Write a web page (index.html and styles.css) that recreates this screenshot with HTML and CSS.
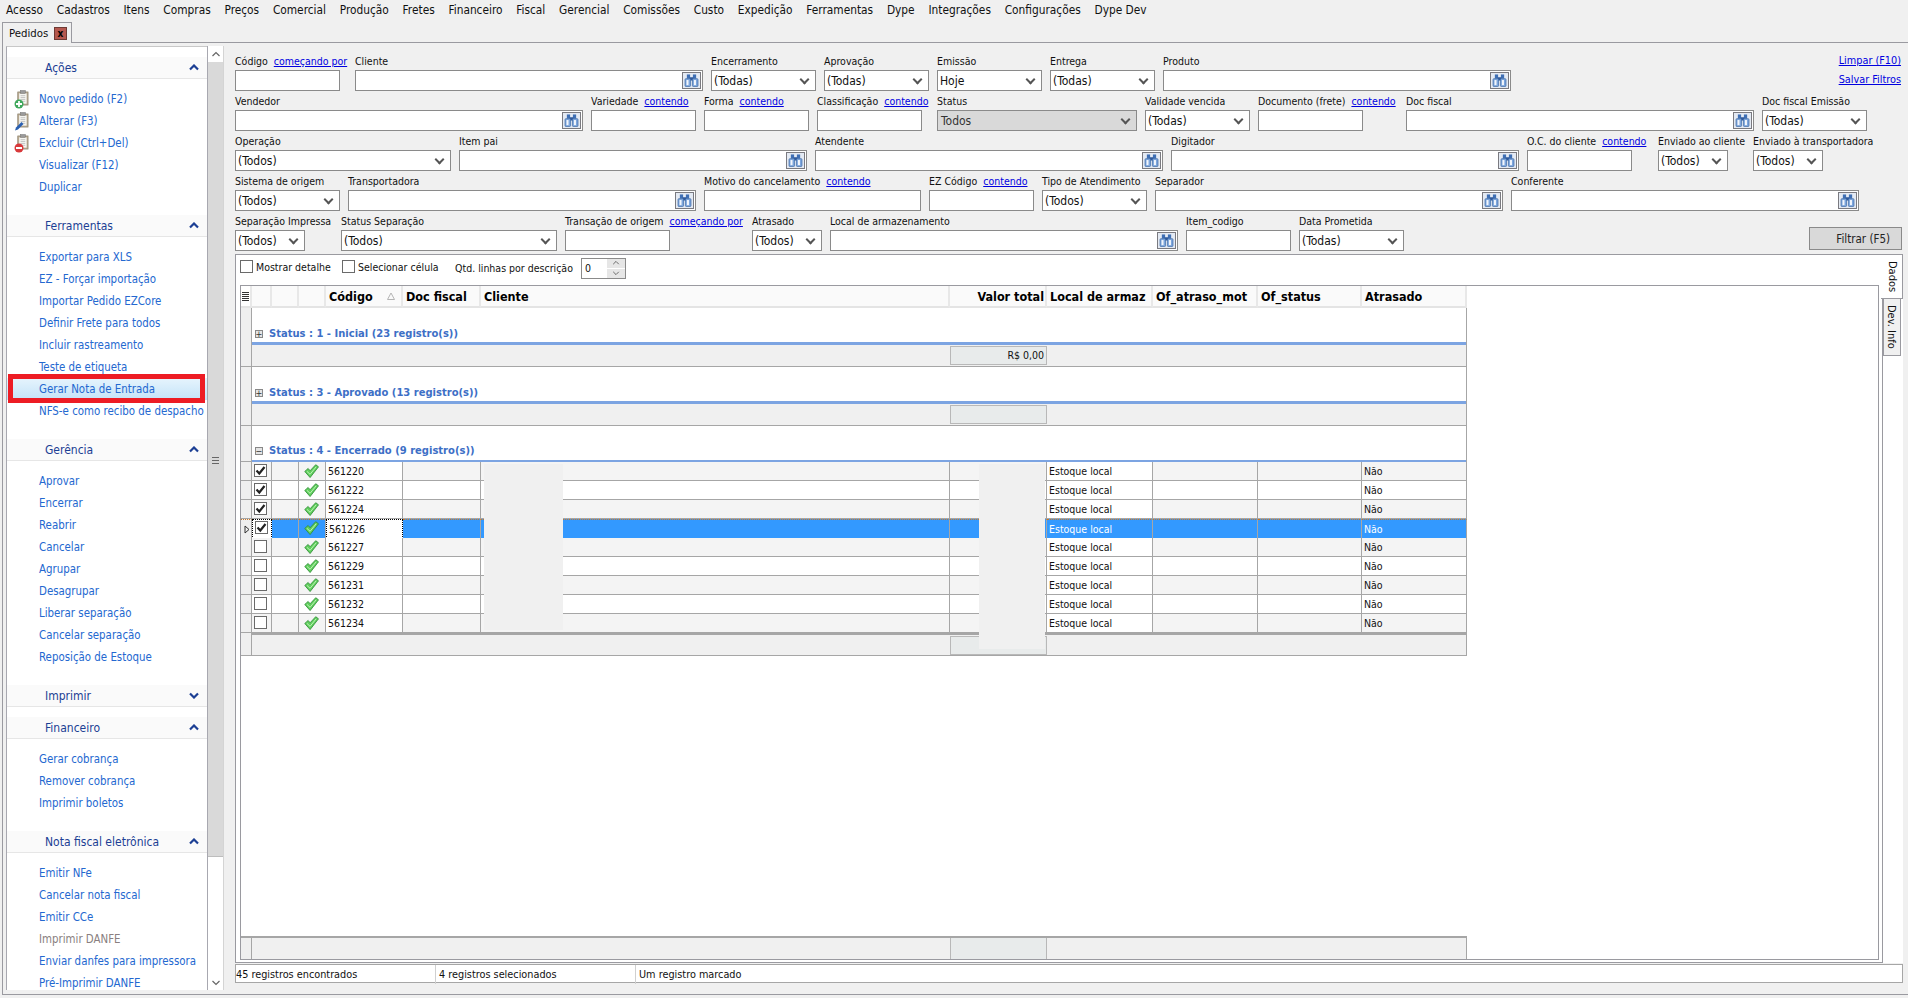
FILE: index.html
```html
<!DOCTYPE html>
<html>
<head>
    <title>Pedidos</title>
    <link rel="stylesheet" href="styles.css">
</head>
<body>

<svg class="defs" width="0" height="0">
    <symbol id="bino" viewBox="0 0 16 14">
        <rect x="3" y="0.5" width="3.5" height="4.5" fill="#3f6fb4"/>
        <rect x="9.5" y="0.5" width="3.5" height="4.5" fill="#3f6fb4"/>
        <rect x="6" y="3.5" width="4" height="3.5" fill="#2f5a9c"/>
        <rect x="1" y="5" width="6" height="8.5" rx="1" fill="#7ea6dc" stroke="#35619f" stroke-width="0.7"/>
        <rect x="9" y="5" width="6" height="8.5" rx="1" fill="#7ea6dc" stroke="#35619f" stroke-width="0.7"/>
        <rect x="2.6" y="6.5" width="2.2" height="5.5" fill="#f2f6fc"/>
        <rect x="10.6" y="6.5" width="2.2" height="5.5" fill="#f2f6fc"/>
    </symbol>
    <symbol id="board" viewBox="0 0 16 18">
        <rect x="4" y="2" width="11" height="14" fill="#b8aa92" stroke="#8a7f6a" stroke-width="0.7"/>
        <rect x="5.5" y="3.5" width="8" height="11" fill="#f6f6f2"/>
        <path d="M7 6h5M7 8h5M7 10h5M7 12h5" stroke="#b4b4b4" stroke-width="0.8"/>
        <rect x="7" y="0.5" width="5" height="3" fill="#9a9a9a" stroke="#6a6a6a" stroke-width="0.5"/>
    </symbol>
    <symbol id="ok" viewBox="0 0 16 15">
        <path d="M0.8 8 L4.4 4.8 L6.5 7.2 L12.5 0.8 L15.5 3 L6.5 14.5 Z" fill="#5fcf5c" stroke="#2d8c36" stroke-width="0.9" stroke-linejoin="round"/>
        <path d="M3 7.8 L6.5 11 L13 3" fill="none" stroke="#c4f4bc" stroke-width="1"/>
    </symbol>
    <symbol id="tick" viewBox="0 0 11 11">
        <path d="M1.5 5.5 L4.3 8.5 L9.5 2" fill="none" stroke="#222" stroke-width="2.2"/>
    </symbol>
    <symbol id="chev" viewBox="0 0 10 7">
        <path d="M1 5.5 L5 1.5 L9 5.5" fill="none" stroke="#1c3f94" stroke-width="2.2"/>
    </symbol>
    <symbol id="arrow" viewBox="0 0 10 7">
        <path d="M1.5 5 L5 1.5 L8.5 5" fill="none" stroke="#666" stroke-width="1.2"/>
    </symbol>
</svg>

<div class="menu-bar">
    <span>Acesso</span>
    <span>Cadastros</span>
    <span>Itens</span>
    <span>Compras</span>
    <span>Preços</span>
    <span>Comercial</span>
    <span>Produção</span>
    <span>Fretes</span>
    <span>Financeiro</span>
    <span>Fiscal</span>
    <span>Gerencial</span>
    <span>Comissões</span>
    <span>Custo</span>
    <span>Expedição</span>
    <span>Ferramentas</span>
    <span>Dype</span>
    <span>Integrações</span>
    <span>Configurações</span>
    <span>Dype Dev</span>
</div>

<div class="tab-strip">
    <div class="page-tab">Pedidos <span class="tab-close">x</span></div>
</div>

<div class="main">
    <div class="sidebar">
        <div class="side-head">Ações <svg class="chev"><use href="#chev"/></svg></div>
        <div class="side-list">
            <a class="action"><svg class="ico"><use href="#board"/></svg><svg class="badge"><circle cx="5" cy="5" r="4.5" fill="#3fa85c"/><path d="M5 2v6M2 5h6" stroke="#fff" stroke-width="1.8"/></svg>Novo pedido (F2)</a>
            <a class="action"><svg class="ico"><use href="#board"/></svg><svg class="badge"><path d="M1 9.5 L2 6.5 L7.5 1 L9.5 3 L4 8.5 Z" fill="#2a5fb0"/></svg>Alterar (F3)</a>
            <a class="action"><svg class="ico"><use href="#board"/></svg><svg class="badge"><circle cx="5" cy="5" r="4.5" fill="#d8393b"/><path d="M2 5h6" stroke="#fff" stroke-width="2"/></svg>Excluir (Ctrl+Del)</a>
            <a class="action">Visualizar (F12)</a>
            <a class="action">Duplicar</a>
        </div>

        <div class="side-head">Ferramentas <svg class="chev"><use href="#chev"/></svg></div>
        <div class="side-list">
            <a class="action">Exportar para XLS</a>
            <a class="action">EZ - Forçar importação</a>
            <a class="action">Importar Pedido EZCore</a>
            <a class="action">Definir Frete para todos</a>
            <a class="action">Incluir rastreamento</a>
            <a class="action">Teste de etiqueta</a>
            <a class="action marked">Gerar Nota de Entrada</a>
            <a class="action">NFS-e como recibo de despacho</a>
        </div>

        <div class="side-head">Gerência <svg class="chev"><use href="#chev"/></svg></div>
        <div class="side-list">
            <a class="action">Aprovar</a>
            <a class="action">Encerrar</a>
            <a class="action">Reabrir</a>
            <a class="action">Cancelar</a>
            <a class="action">Agrupar</a>
            <a class="action">Desagrupar</a>
            <a class="action">Liberar separação</a>
            <a class="action">Cancelar separação</a>
            <a class="action">Reposição de Estoque</a>
        </div>

        <div class="side-head closed">Imprimir <svg class="chev flip"><use href="#chev"/></svg></div>

        <div class="side-head">Financeiro <svg class="chev"><use href="#chev"/></svg></div>
        <div class="side-list">
            <a class="action">Gerar cobrança</a>
            <a class="action">Remover cobrança</a>
            <a class="action">Imprimir boletos</a>
        </div>

        <div class="side-head">Nota fiscal eletrônica <svg class="chev"><use href="#chev"/></svg></div>
        <div class="side-list">
            <a class="action">Emitir NFe</a>
            <a class="action">Cancelar nota fiscal</a>
            <a class="action">Emitir CCe</a>
            <a class="action muted">Imprimir DANFE</a>
            <a class="action">Enviar danfes para impressora</a>
            <a class="action">Pré-Imprimir DANFE</a>
        </div>
    </div>

    <div class="side-scroll">
        <div class="scroll-btn"><svg class="arrow"><use href="#arrow"/></svg></div>
        <div class="scroll-thumb"><span class="grip"></span></div>
        <div class="scroll-rest"></div>
        <div class="scroll-btn"><svg class="arrow flip"><use href="#arrow"/></svg></div>
    </div>

    <div class="content">
        <div class="filter-row">
            <div class="field w105 mr7"><label>Código <a>começando por</a></label><div class="box"></div></div>
            <div class="field w348"><label>Cliente</label><div class="box"><button class="find"><svg><use href="#bino"/></svg></button></div></div>
            <div class="field w105"><label>Encerramento</label><div class="box combo">(Todas)</div></div>
            <div class="field w105"><label>Aprovação</label><div class="box combo">(Todas)</div></div>
            <div class="field w105"><label>Emissão</label><div class="box combo">Hoje</div></div>
            <div class="field w105"><label>Entrega</label><div class="box combo">(Todas)</div></div>
            <div class="field w348"><label>Produto</label><div class="box"><button class="find"><svg><use href="#bino"/></svg></button></div></div>
            <div class="filter-links"><a>Limpar (F10)</a><a>Salvar Filtros</a></div>
        </div>
        <div class="filter-row">
            <div class="field w348"><label>Vendedor</label><div class="box"><button class="find"><svg><use href="#bino"/></svg></button></div></div>
            <div class="field w105"><label>Variedade <a>contendo</a></label><div class="box"></div></div>
            <div class="field w105"><label>Forma <a>contendo</a></label><div class="box"></div></div>
            <div class="field w105 mr7"><label>Classificação <a>contendo</a></label><div class="box"></div></div>
            <div class="field w200"><label>Status</label><div class="box combo off">Todos</div></div>
            <div class="field w105"><label>Validade vencida</label><div class="box combo">(Todas)</div></div>
            <div class="field w105 mr35"><label>Documento (frete) <a>contendo</a></label><div class="box"></div></div>
            <div class="field w348"><label>Doc fiscal</label><div class="box"><button class="find"><svg><use href="#bino"/></svg></button></div></div>
            <div class="field w105"><label>Doc fiscal Emissão</label><div class="box combo">(Todas)</div></div>
        </div>
        <div class="filter-row">
            <div class="field w216"><label>Operação</label><div class="box combo">(Todos)</div></div>
            <div class="field w348"><label>Item pai</label><div class="box"><button class="find"><svg><use href="#bino"/></svg></button></div></div>
            <div class="field w348"><label>Atendente</label><div class="box"><button class="find"><svg><use href="#bino"/></svg></button></div></div>
            <div class="field w348"><label>Digitador</label><div class="box"><button class="find"><svg><use href="#bino"/></svg></button></div></div>
            <div class="field w105 mr18"><label>O.C. do cliente <a>contendo</a></label><div class="box"></div></div>
            <div class="field w70 mr17"><label>Enviado ao cliente</label><div class="box combo">(Todos)</div></div>
            <div class="field w70"><label>Enviado à transportadora</label><div class="box combo">(Todos)</div></div>
        </div>
        <div class="filter-row">
            <div class="field w105"><label>Sistema de origem</label><div class="box combo">(Todos)</div></div>
            <div class="field w348"><label>Transportadora</label><div class="box"><button class="find"><svg><use href="#bino"/></svg></button></div></div>
            <div class="field w217"><label>Motivo do cancelamento <a>contendo</a></label><div class="box"></div></div>
            <div class="field w105"><label>EZ Código <a>contendo</a></label><div class="box"></div></div>
            <div class="field w105"><label>Tipo de Atendimento</label><div class="box combo">(Todos)</div></div>
            <div class="field w348"><label>Separador</label><div class="box"><button class="find"><svg><use href="#bino"/></svg></button></div></div>
            <div class="field w348"><label>Conferente</label><div class="box"><button class="find"><svg><use href="#bino"/></svg></button></div></div>
        </div>
        <div class="filter-row">
            <div class="field w70 mr28"><label>Separação Impressa</label><div class="box combo">(Todos)</div></div>
            <div class="field w216"><label>Status Separação</label><div class="box combo">(Todos)</div></div>
            <div class="field w105 mr74"><label>Transação de origem <a>começando por</a></label><div class="box"></div></div>
            <div class="field w70"><label>Atrasado</label><div class="box combo">(Todos)</div></div>
            <div class="field w348"><label>Local de armazenamento</label><div class="box"><button class="find"><svg><use href="#bino"/></svg></button></div></div>
            <div class="field w105"><label>Item_codigo</label><div class="box"></div></div>
            <div class="field w105"><label>Data Prometida</label><div class="box combo">(Todas)</div></div>
            <button class="filter-btn">Filtrar (F5)</button>
        </div>

        <div class="panel">
            <div class="panel-body">
                <div class="grid-tools">
                    <span class="tool-check"><i class="cb"></i>Mostrar detalhe</span>
                    <span class="tool-check"><i class="cb"></i>Selecionar célula</span>
                    <span class="qtd">Qtd. linhas por descrição</span>
                    <span class="spin">0<span class="spin-btns"><span><svg class="arrow"><use href="#arrow"/></svg></span><span><svg class="arrow flip"><use href="#arrow"/></svg></span></span></span>
                </div>

                <div class="grid-frame">
                    <div class="cols head">
                        <span class="hd-ind"><b></b><b></b><b></b><b></b><b></b></span>
                        <span></span>
                        <span></span>
                        <span></span>
                        <span>Código<svg class="sort"><path d="M4 1 L7.5 7.5 H0.5 Z" fill="none" stroke="#b4b4b4"/></svg></span>
                        <span>Doc fiscal</span>
                        <span>Cliente</span>
                        <span class="right">Valor total</span>
                        <span>Local de armaz</span>
                        <span>Of_atraso_mot</span>
                        <span>Of_status</span>
                        <span>Atrasado</span>
                    </div>

                    <div class="group">
                        <div class="group-ind"></div>
                        <div class="group-main">
                            <div class="group-title"><i class="expander">+</i>Status : 1 - Inicial (23 registro(s))</div>
                            <div class="group-foot"><span class="sum">R$ 0,00</span></div>
                        </div>
                    </div>
                    <div class="group">
                        <div class="group-ind"></div>
                        <div class="group-main">
                            <div class="group-title"><i class="expander">+</i>Status : 3 - Aprovado (13 registro(s))</div>
                            <div class="group-foot"><span class="sum"></span></div>
                        </div>
                    </div>
                    <div class="group open">
                        <div class="group-ind"></div>
                        <div class="group-main">
                            <div class="group-title"><i class="expander">−</i>Status : 4 - Encerrado (9 registro(s))</div>
                        </div>
                    </div>

                    <div class="cols row"><span class="ind"></span><span class="chk"><i class="cb"><svg><use href="#tick"/></svg></i></span><span></span><span class="st"><svg><use href="#ok"/></svg></span><span class="plain">561220</span><span></span><span></span><span></span><span class="plain">Estoque local</span><span></span><span></span><span>Não</span></div>
                    <div class="cols row alt"><span class="ind"></span><span class="chk"><i class="cb"><svg><use href="#tick"/></svg></i></span><span></span><span class="st"><svg><use href="#ok"/></svg></span><span class="plain">561222</span><span></span><span></span><span></span><span class="plain">Estoque local</span><span></span><span></span><span>Não</span></div>
                    <div class="cols row"><span class="ind"></span><span class="chk"><i class="cb"><svg><use href="#tick"/></svg></i></span><span></span><span class="st"><svg><use href="#ok"/></svg></span><span class="plain">561224</span><span></span><span></span><span></span><span class="plain">Estoque local</span><span></span><span></span><span>Não</span></div>
                    <div class="cols row picked"><span class="ind"><svg class="pointer"><path d="M1 1 L5 4.5 L1 8 Z" fill="none" stroke="#333"/></svg></span><span class="chk focus"><i class="cb"><svg><use href="#tick"/></svg></i></span><span></span><span class="st"><svg><use href="#ok"/></svg></span><span class="focus">561226</span><span></span><span></span><span></span><span>Estoque local</span><span></span><span></span><span>Não</span></div>
                    <div class="cols row"><span class="ind"></span><span class="chk"><i class="cb"></i></span><span></span><span class="st"><svg><use href="#ok"/></svg></span><span class="plain">561227</span><span></span><span></span><span></span><span class="plain">Estoque local</span><span></span><span></span><span>Não</span></div>
                    <div class="cols row alt"><span class="ind"></span><span class="chk"><i class="cb"></i></span><span></span><span class="st"><svg><use href="#ok"/></svg></span><span class="plain">561229</span><span></span><span></span><span></span><span class="plain">Estoque local</span><span></span><span></span><span>Não</span></div>
                    <div class="cols row"><span class="ind"></span><span class="chk"><i class="cb"></i></span><span></span><span class="st"><svg><use href="#ok"/></svg></span><span class="plain">561231</span><span></span><span></span><span></span><span class="plain">Estoque local</span><span></span><span></span><span>Não</span></div>
                    <div class="cols row alt"><span class="ind"></span><span class="chk"><i class="cb"></i></span><span></span><span class="st"><svg><use href="#ok"/></svg></span><span class="plain">561232</span><span></span><span></span><span></span><span class="plain">Estoque local</span><span></span><span></span><span>Não</span></div>
                    <div class="cols row"><span class="ind"></span><span class="chk"><i class="cb"></i></span><span></span><span class="st"><svg><use href="#ok"/></svg></span><span class="plain">561234</span><span></span><span></span><span></span><span class="plain">Estoque local</span><span></span><span></span><span>Não</span></div>

                    <div class="group last">
                        <div class="group-ind"></div>
                        <div class="group-main">
                            <div class="group-foot"><span class="sum"></span></div>
                        </div>
                    </div>

                    <div class="grid-band">
                        <div class="group-ind"></div>
                        <div class="band-main"><span class="sum"></span></div>
                    </div>

                    <div class="mask mask-client"></div>
                    <div class="mask mask-value"></div>
                </div>
            </div>
            <div class="side-tabs">
                <div class="v-tab active">Dados</div>
                <div class="v-tab">Dev. Info</div>
            </div>
        </div>

        <div class="status-bar">
            <span>45 registros encontrados</span>
            <span>4 registros selecionados</span>
            <span>Um registro marcado</span>
        </div>
    </div>
</div>

</body>
</html>
```

FILE: styles.css
```css
* {
    box-sizing: border-box;
}
html, body {
    height: 100%;
}
body {
    margin: 0;
    display: flex;
    flex-direction: column;
    overflow: hidden;
    background: #f0f0f0;
    color: #111;
    font-family: "DejaVu Sans", Tahoma, sans-serif;
    font-stretch: condensed;
    font-size: 10.5px;
}
.defs {
    position: absolute;
}
a {
    color: #0000e0;
    text-decoration: underline;
}

/* top menu */
.menu-bar {
    display: flex;
    gap: 13.75px;
    height: 22px;
    padding: 2px 0 0 6px;
    font-size: 11.8px;
    line-height: 16px;
}
.tab-strip {
    height: 21px;
    margin-left: 2px;
    border-bottom: 1px solid #9a9aa0;
}
.page-tab {
    display: flex;
    justify-content: space-between;
    align-items: center;
    width: 70px;
    height: 21px;
    padding: 0 4px 0 6px;
    font-size: 11.3px;
    background: #f0f0f0;
    border: 1px solid #9a9aa0;
    border-bottom: none;
}
.tab-close {
    width: 13px;
    height: 13px;
    font-size: 10px;
    font-weight: bold;
    line-height: 11px;
    text-align: center;
    background: #b4574e;
    border: 1px solid #6e3a34;
    color: #000;
}

.main {
    flex: 1;
    display: flex;
    min-height: 0;
    margin: 0 0 3px 2px;
    padding: 3px 0 4px 3px;
    border-left: 1px solid #9a9aa0;
    border-bottom: 1px solid #9a9aa0;
}

/* left actions */
.sidebar {
    width: 201px;
    flex: none;
    padding-top: 10px;
    overflow: hidden;
    background: #fff;
    border-left: 1px solid #a8a8b0;
    border-top: 1px solid #c8c8c8;
}
.side-head {
    display: flex;
    justify-content: space-between;
    align-items: center;
    height: 22px;
    padding: 0 8px 0 38px;
    color: #1c3f94;
    font-size: 12px;
    background: #fafafa;
    border-bottom: 1px solid #e6e6e6;
}
.side-head.closed {
    margin-bottom: 10px;
}
.chev {
    width: 10px;
    height: 7px;
}
.flip {
    transform: scaleY(-1);
}
.side-list {
    padding: 9px 0 17px;
}
.action {
    display: flex;
    align-items: center;
    position: relative;
    height: 22px;
    padding-left: 32px;
    color: #2468d0;
    font-size: 11.4px;
    text-decoration: none;
    white-space: nowrap;
}
.action.muted {
    color: #8a7f80;
}
.action.marked {
    background: linear-gradient(#e6f4fd, #c4e3f8);
}
.action.marked::after {
    content: "";
    position: absolute;
    left: 1px;
    right: 2px;
    top: -4px;
    bottom: -3px;
    border: 5px solid #ed1c24;
}
.ico {
    position: absolute;
    left: 7px;
    top: 2px;
    width: 15px;
    height: 17px;
}
.badge {
    position: absolute;
    left: 7px;
    top: 11px;
    width: 10px;
    height: 10px;
}

.side-scroll {
    width: 17px;
    flex: none;
    display: flex;
    flex-direction: column;
    border-left: 1px solid #a8a8b0;
    border-right: 1px solid #d4d4d4;
    background: #fff;
}
.scroll-btn {
    display: flex;
    justify-content: center;
    align-items: center;
    height: 16px;
    flex: none;
}
.arrow {
    width: 10px;
    height: 7px;
}
.scroll-thumb {
    display: flex;
    align-items: center;
    justify-content: center;
    height: 795px;
    flex: none;
    background: #d9d9d9;
    border-bottom: 1px solid #bdbdbd;
}
.grip {
    width: 7px;
    height: 7px;
    margin-top: 3px;
    border-top: 1px solid #666;
    border-bottom: 1px solid #666;
    background: linear-gradient(#d9d9d9 2px, #666 2px, #666 3px, #d9d9d9 3px);
}
.scroll-rest {
    flex: 1;
}

/* filters */
.content {
    flex: 1;
    min-width: 0;
    display: flex;
    flex-direction: column;
    padding: 6px 5px 0 11px;
}
.filter-row {
    display: flex;
    gap: 8px;
    height: 40px;
    flex: none;
}
.field {
    flex: none;
}
.field label {
    display: block;
    height: 18px;
    line-height: 18px;
    white-space: nowrap;
}
.field label a {
    margin-left: 3px;
}
.w70 { width: 70px; }
.w105 { width: 105px; }
.w200 { width: 200px; }
.w216 { width: 216px; }
.w217 { width: 217px; }
.w348 { width: 348px; }
.mr7 { margin-right: 7px; }
.mr17 { margin-right: 17px; }
.mr18 { margin-right: 18px; }
.mr28 { margin-right: 28px; }
.mr35 { margin-right: 35px; }
.mr74 { margin-right: 74px; }
.box {
    display: flex;
    align-items: center;
    justify-content: flex-end;
    height: 21px;
    padding: 1px;
    background: #fff;
    border: 1px solid #8a8a8a;
}
.combo {
    justify-content: space-between;
    padding: 0 7px 0 2px;
    font-size: 12px;
}
.combo::after {
    content: "";
    width: 5px;
    height: 5px;
    margin-top: -3px;
    border-right: 2px solid #555;
    border-bottom: 2px solid #555;
    transform: rotate(45deg);
}
.combo.off {
    padding-left: 3px;
    background: #d9d9d9;
    color: #333;
}
.find {
    display: flex;
    justify-content: center;
    align-items: center;
    width: 19px;
    height: 17px;
    padding: 0;
    background: #e4eaf3;
    border: 1px solid #7a7a80;
}
.find svg {
    width: 15px;
    height: 13px;
}
.filter-links {
    flex: 1;
    display: flex;
    flex-direction: column;
    align-items: flex-end;
    gap: 7px;
    padding: 3px 2px 0 0;
    font-size: 10.8px;
    line-height: 12px;
}
.filter-btn {
    align-self: flex-end;
    width: 93px;
    height: 23px;
    margin: 0 1px 2px auto;
    padding: 0 11px 0 0;
    text-align: right;
    font: inherit;
    font-size: 11.5px;
    color: #222;
    background: #d9d9d9;
    border: 1px solid #8a8a8a;
}

/* data panel */
.panel {
    flex: 1;
    min-height: 0;
    display: flex;
    margin-top: 2px;
    background: #fff;
}
.panel-body {
    flex: 1;
    min-width: 0;
    display: flex;
    flex-direction: column;
    padding: 0 3px 2px 4px;
    border: 1px solid #9a9aa0;
}
.grid-tools {
    display: flex;
    align-items: center;
    height: 30px;
    flex: none;
    padding-bottom: 4px;
}
.tool-check {
    display: flex;
    align-items: center;
    gap: 3px;
    margin-top: -3px;
}
.tool-check:first-child {
    width: 102px;
}
.tool-check:nth-child(2) {
    width: 113px;
}
.cb {
    display: flex;
    justify-content: center;
    align-items: center;
    width: 13px;
    height: 13px;
    flex: none;
    background: #fff;
    border: 1px solid #6a6a6a;
}
.cb svg {
    width: 11px;
    height: 11px;
}
.qtd {
    width: 126px;
}
.spin {
    display: flex;
    justify-content: space-between;
    align-items: center;
    width: 45px;
    height: 21px;
    padding-left: 3px;
    border: 1px solid #8a8a8a;
}
.spin-btns {
    display: flex;
    flex-direction: column;
    gap: 1px;
    width: 18px;
}
.spin-btns span {
    display: flex;
    justify-content: center;
    align-items: center;
    height: 9px;
    background: #e6e6e6;
}
.spin-btns svg {
    width: 8px;
    height: 6px;
}

/* grid */
.grid-frame {
    position: relative;
    flex: 1;
    min-height: 0;
    display: flex;
    flex-direction: column;
    border: 1px solid #9a9aa0;
}
.cols {
    display: grid;
    grid-template-columns: 11px 20px 27px 27px 77px 78px 469px 97px 106px 105px 104px 105px;
    width: 1226px;
    flex: none;
}
.head {
    height: 22px;
    font-size: 12.5px;
    font-weight: bold;
    line-height: 22px;
    color: #000;
}
.head span {
    position: relative;
    overflow: hidden;
    padding-left: 3px;
    white-space: nowrap;
    background: #fafafa;
    border-right: 2px solid #e8e8e8;
    border-bottom: 2px solid #e4e4e4;
}
.head .right {
    padding: 0 1px 0 0;
    text-align: right;
}
.head span.hd-ind {
    display: flex;
    flex-direction: column;
    align-items: center;
    justify-content: center;
    gap: 1px;
    padding: 0;
    background: #fff;
}
.hd-ind b {
    width: 7px;
    height: 1px;
    background: #333;
}
.sort {
    position: absolute;
    right: 6px;
    top: 6px;
    width: 8px;
    height: 8px;
}
.group {
    display: flex;
    height: 59px;
    width: 1226px;
    flex: none;
}
.group.open {
    height: 36px;
}
.group.last {
    height: 23px;
}
.group-ind {
    width: 11px;
    flex: none;
    background: #efefef;
    border-right: 1px solid #a6a6a6;
    border-bottom: 1px solid #a6a6a6;
}
.group-main {
    flex: 1;
    border-right: 1px solid #a6a6a6;
}
.group-title {
    display: flex;
    align-items: flex-end;
    height: 37px;
    padding: 0 0 1px 3px;
    color: #3d6fc6;
    font-size: 11.1px;
    font-weight: bold;
    line-height: 14px;
    border-bottom: 3px solid #7ca4e2;
}
.open .group-title {
    height: 36px;
    padding-bottom: 2px;
    border-bottom-width: 2px;
}
.expander {
    display: flex;
    justify-content: center;
    align-items: center;
    width: 8px;
    height: 8px;
    margin: 0 6px 3px 0;
    color: #333;
    font-size: 9px;
    font-style: normal;
    font-weight: normal;
    background: #e4e4e4;
    border: 1px solid #888;
}
.group-foot {
    display: flex;
    height: 22px;
    padding: 1px 0 0 698px;
    background: #f0f0f0;
    border-bottom: 1px solid #a6a6a6;
}
.last .group-foot {
    height: 23px;
    border-top: 2px solid #a6a6a6;
}
.sum {
    width: 97px;
    height: 19px;
    padding-right: 2px;
    line-height: 17px;
    text-align: right;
    background: #e8ebeb;
    border: 1px solid #b8b8b8;
}
.row {
    height: 19px;
    line-height: 18px;
    font-size: 10.5px;
    background: #f4f4f4;
}
.row.alt {
    background: #fff;
}
.row span {
    padding-left: 2px;
    border-right: 1px solid #a6a6a6;
    border-bottom: 1px solid #a6a6a6;
    white-space: nowrap;
}
.row span.plain {
    background: #fff;
}
.row span.ind {
    display: flex;
    align-items: center;
    padding-left: 3px;
    background: #efefef;
}
.row span.chk {
    padding: 2px 0 0 2px;
}
.row span.st {
    padding: 2px 0 0 5px;
}
.st svg {
    display: block;
    width: 15px;
    height: 14px;
}
.row.picked {
    background: #3399ff;
    color: #fff;
}
.picked span {
    border-top: 1px dotted #c8782a;
    border-bottom: 1px dotted #c8782a;
}
.picked span.chk {
    padding-top: 1px;
}
.picked span.st {
    padding-top: 1px;
}
.picked span.focus {
    background: #fff;
    color: #111;
    border: 1px dotted #000;
}
.pointer {
    width: 6px;
    height: 9px;
}
.grid-band {
    display: flex;
    width: 1226px;
    height: 23px;
    margin-top: auto;
    flex: none;
    border-top: 2px solid #a6a6a6;
}
.grid-band .group-ind {
    border-bottom: none;
}
.band-main {
    flex: 1;
    padding-left: 698px;
    background: #f0f0f0;
    border-right: 1px solid #a6a6a6;
}
.band-main .sum {
    display: block;
    height: 21px;
    border-width: 0 1px;
}
.mask {
    position: absolute;
    background: #f0f0f0;
}
.mask-client {
    left: 243px;
    top: 178px;
    width: 79px;
    height: 166px;
}
.mask-value {
    left: 738px;
    top: 178px;
    width: 66px;
    height: 185px;
}

/* vertical tabs */
.side-tabs {
    width: 20px;
    flex: none;
}
.v-tab {
    writing-mode: vertical-rl;
    width: 18px;
    height: 57px;
    padding: 6px 1px 0 0;
    font-size: 11px;
    line-height: 16px;
    background: #f0f0f0;
    border: 1px solid #9a9aa0;
    border-top: none;
}
.v-tab.active {
    position: relative;
    width: 22px;
    height: 45px;
    margin-left: -2px;
    padding-right: 2px;
    background: #fff;
    border-left: none;
    border-top: 1px solid #9a9aa0;
}

.status-bar {
    display: grid;
    grid-template-columns: 200px 200px 1fr;
    height: 19px;
    margin: 1px 0 7px;
    flex: none;
    font-size: 10.8px;
    line-height: 19px;
    background: #fff;
    border: 1px solid #a6a6a6;
}
.status-bar span {
    padding-left: 3px;
    border-right: 1px solid #d0d0d0;
}
.status-bar span:first-child {
    padding-left: 0;
}
.status-bar span:last-child {
    border-right: none;
}
```
